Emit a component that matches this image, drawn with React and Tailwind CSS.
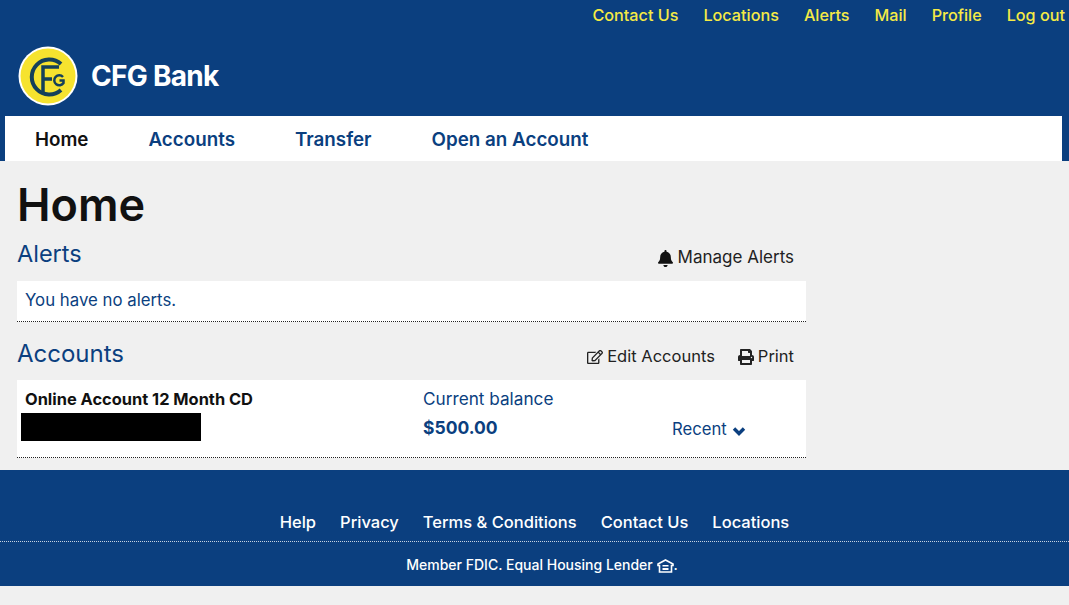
import { FaBell, FaRegEdit, FaPrint } from "react-icons/fa";

const topLinks = ["Contact Us", "Locations", "Alerts", "Mail", "Profile", "Log out"];
const navLinks = ["Accounts", "Transfer", "Open an Account"];
const footerLinks = ["Help", "Privacy", "Terms & Conditions", "Contact Us", "Locations"];

function Logo() {
  return (
    <svg width="62" height="62" viewBox="0 0 62 62" className="shrink-0">
      <circle cx="31" cy="31" r="29.500" fill="#fff" />
      <circle cx="31" cy="31" r="27.500" fill="#f6e32f" />
      <path d="M44 19 A17.500 17.500 0 1 0 44 45" fill="none" stroke="#14405a" strokeWidth="4" />
      <path d="M42 22 H26 V47 M26 34 H35" fill="none" stroke="#14405a" strokeWidth="3.500" />
      <path d="M46 32 A5 5 0 1 0 46.500 38 V35.500 H42.500" fill="none" stroke="#14405a" strokeWidth="2.500" />
    </svg>
  );
}

function HousingIcon() {
  return (
    <svg width="17" height="14" viewBox="0 0 17 14" className="inline-block align-[-3px]">
      <path d="M8.5 1 L16 5 V6.5 H14.5 V13 H2.5 V6.5 H1 V5 Z" fill="none" stroke="#fff" strokeWidth="1.6" />
      <path d="M5.5 6 H11.5 V7.5 H5.5 Z M5.5 9 H11.5 V11 H5.5 Z" fill="#fff" />
    </svg>
  );
}

function Chevron() {
  return (
    <svg width="14" height="10" viewBox="0 0 14 10" className="mt-[3px]">
      <path d="M2 2.500 L7 7.500 L12 2.500" fill="none" stroke="#0b3f7f" strokeWidth="3.400" />
    </svg>
  );
}

export default function App() {
  return (
    <div className="min-h-[605px] bg-[#f0f0f0] font-['Inter','Liberation_Sans',sans-serif]">
      <header className="h-[161px] bg-[#0b3f7f] flex flex-col">
        <div className="h-[31px] flex justify-end items-center gap-[25px] pr-1 text-[16.2px] font-medium text-[#f5ea45]">
          {topLinks.map((l) => (
            <a key={l}>{l}</a>
          ))}
        </div>
        <div className="h-[85px] flex items-center pl-[17px] pt-[4px] gap-3">
          <Logo />
          <span className="text-[28px] font-bold text-white tracking-tight">CFG Bank</span>
        </div>
        <nav className="h-[45px] ml-[5px] mr-[7px] pt-[3px] bg-white flex items-center pl-[30px] gap-[60px] text-[18.8px] font-semibold text-[#0b3f7f]">
          <a className="text-[#111]">Home</a>
          {navLinks.map((l) => (
            <a key={l}>{l}</a>
          ))}
        </nav>
      </header>

      <main className="h-[309px] w-[789px] ml-[17px] flex flex-col">
        <h1 className="mt-[18px] text-[45px] leading-[52px] font-semibold text-[#111]">Home</h1>

        <div className="mt-[5px] h-[40px] flex items-center justify-between pr-3">
          <h2 className="text-[23.5px] text-[#0b3f7f] pb-1">Alerts</h2>
          <a className="flex items-center gap-1 pt-[3px] text-[17px] text-[#222]">
            <FaBell className="text-[17px] text-[#111] mt-[2px]" />
            Manage Alerts
          </a>
        </div>
        <div className="mt-[5px] h-[41px] bg-white border-b border-dotted border-[#222] flex items-center pl-2 text-[16.8px] text-[#0b3f7f]">
          You have no alerts.
        </div>

        <div className="mt-[12px] h-[40px] flex items-center justify-between pr-3">
          <h2 className="text-[24px] text-[#0b3f7f]">Accounts</h2>
          <div className="flex items-center gap-[23px] pt-1 text-[16.5px] text-[#222]">
            <a className="flex items-center gap-1">
              <FaRegEdit className="text-[16px] mt-[2px]" />
              Edit Accounts
            </a>
            <a className="flex items-center gap-1">
              <FaPrint className="text-[16px] mt-[2px]" />
              Print
            </a>
          </div>
        </div>
        <div className="mt-[6px] h-[78px] bg-white border-b border-dotted border-[#222] flex">
          <div className="w-[406px] pl-2 pt-2">
            <div className="text-[16.4px] leading-[22px] font-bold text-[#111]">Online Account 12 Month CD</div>
            <div className="w-[180px] h-[28px] bg-black ml-[-4px] mt-[3px]" />
          </div>
          <div className="w-[249px] pt-2 text-[#0b3f7f]">
            <div className="text-[17.2px] leading-[22px]">Current balance</div>
            <div className="mt-[6px] text-[17.5px] leading-[24px] font-bold">$500.00</div>
          </div>
          <a className="self-start mt-[38px] flex items-center gap-[5px] text-[16.7px] leading-[22px] text-[#0b3f7f]">
            Recent
            <Chevron />
          </a>
        </div>
      </main>

      <footer className="h-[116px] bg-[#0b3f7f] text-white flex flex-col">
        <div className="h-[71px] pt-[40px] flex justify-center gap-6 text-[16.5px] font-medium">
          {footerLinks.map((l) => (
            <a key={l} className="leading-[24px]">{l}</a>
          ))}
        </div>
        <div className="flex-1 pl-[15px] border-t border-dotted border-[#c8d3e0] flex items-center justify-center text-[14px] font-medium">
          <span>
            Member FDIC. Equal Housing Lender <HousingIcon />.
          </span>
        </div>
      </footer>
    </div>
  );
}
